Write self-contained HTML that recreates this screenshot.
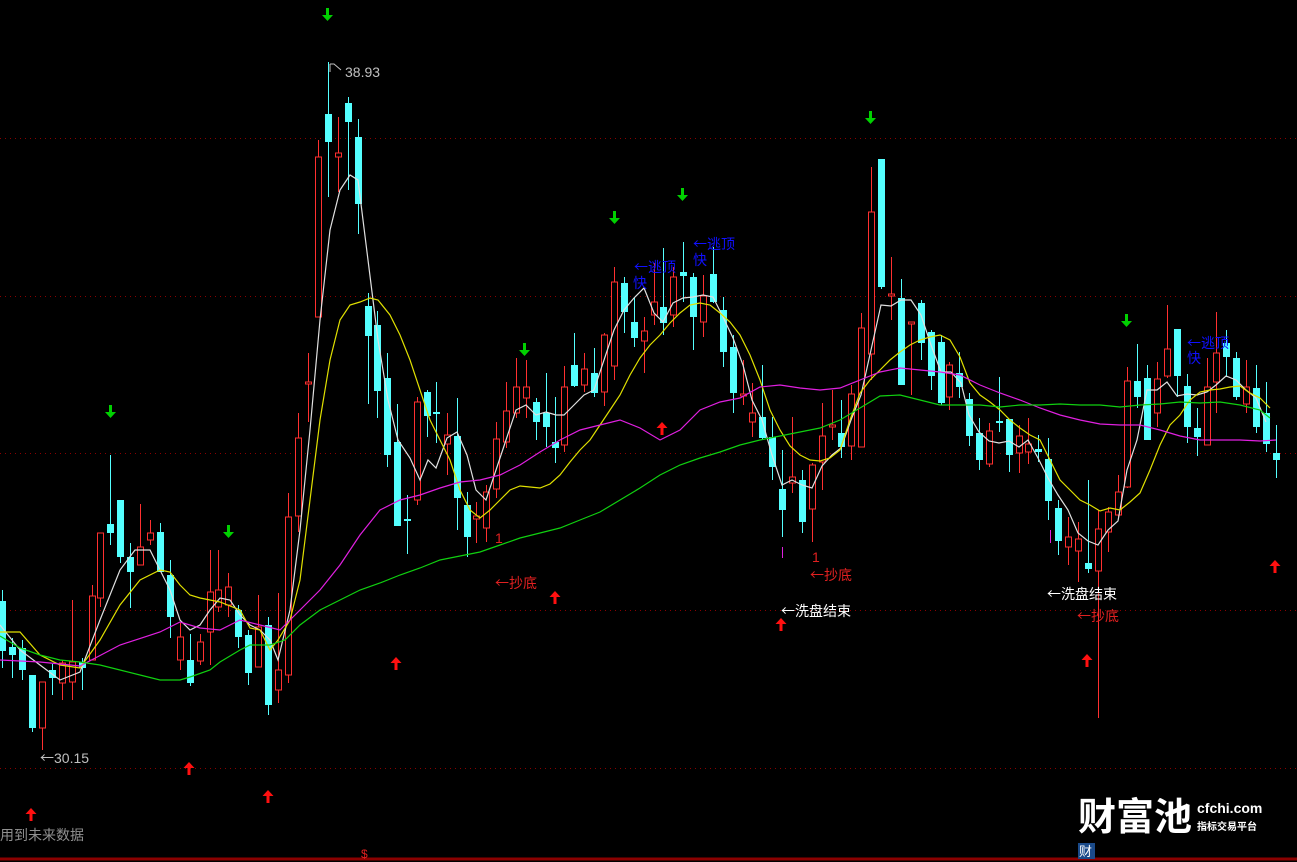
<!DOCTYPE html>
<html><head><meta charset="utf-8"><style>
html,body{margin:0;padding:0;background:#000;width:1297px;height:862px;overflow:hidden}
svg{display:block}
text{font-family:"Liberation Sans","Noto Sans CJK SC",sans-serif}
.cj{font-family:"Noto Sans CJK SC","Liberation Sans",sans-serif}
</style></head><body>
<svg id="s" width="1297" height="862" xmlns="http://www.w3.org/2000/svg">
<g stroke="#8b0000" stroke-dasharray="1,4" stroke-width="1">
<line x1="0" y1="138.5" x2="1297" y2="138.5"/><line x1="0" y1="296.5" x2="1297" y2="296.5"/>
<line x1="0" y1="453.5" x2="1297" y2="453.5"/><line x1="0" y1="610.5" x2="1297" y2="610.5"/>
<line x1="0" y1="768.5" x2="1297" y2="768.5"/></g>
<line x1="0" y1="859" x2="1297" y2="859" stroke="#8b0000" stroke-width="3"/>
<g id="c"></g>
<g id="l" fill="none" stroke-width="1.2"></g>
<g id="a"></g>
<g font-size="14">
<text x="345" y="77" fill="#c0c0c0">38.93</text>
<path d="M330 64 v8 M330 64 h4 l7 6" stroke="#c0c0c0" fill="none"/>
<text x="40" y="763" fill="#c0c0c0" class="cj">←<tspan font-family="Liberation Sans">30.15</tspan></text>
<text x="495" y="543" fill="#e02020">1</text>
<text x="495" y="588" fill="#e02020" class="cj">←抄底</text>
<text x="812" y="562" fill="#e02020">1</text>
<text x="810" y="580" fill="#e02020" class="cj">←抄底</text>
<text x="781" y="616" fill="#fff" class="cj">←洗盘结束</text>
<text x="1047" y="599" fill="#fff" class="cj">←洗盘结束</text>
<text x="1077" y="621" fill="#e02020" class="cj">←抄底</text>
<text x="634" y="272" fill="#1010ff" class="cj">←逃顶</text><text x="633" y="288" fill="#1010ff" class="cj">快</text>
<text x="693" y="249" fill="#1010ff" class="cj">←逃顶</text><text x="693" y="265" fill="#1010ff" class="cj">快</text>
<text x="1187" y="348" fill="#1010ff" class="cj">←逃顶</text><text x="1187" y="363" fill="#1010ff" class="cj">快</text>
<text x="0" y="840" fill="#909090" class="cj">用到未来数据</text>
<text x="361" y="858" fill="#e02020" font-size="12">$</text>
</g>
<text x="1078" y="830" fill="#fff" font-size="38" font-weight="bold" font-family="'Noto Sans CJK SC',sans-serif">财富池</text>
<text x="1197" y="813" fill="#fff" font-size="14" font-weight="bold">cfchi.com</text>
<text x="1197" y="830" fill="#fff" font-size="10" font-weight="bold" font-family="'Noto Sans CJK SC',sans-serif">指标交易平台</text>
<rect x="1078" y="843" width="17" height="16" fill="#1a4a8a"/>
<text x="1079" y="856" fill="#fff" font-size="13" font-family="'Noto Sans CJK SC',sans-serif">财</text>
</svg>
<script>
var C=[[2,601,651,590,668,'c'],[12,647,655,638,678,'c'],[22,648,670,640,680,'c'],[32,675,728,675,732,'c'],[42,682,728,682,750,'r'],[52,670,678,664,695,'c'],[62,663,683,660,700,'r'],[72,662,682,600,700,'r'],[82,662,668,658,690,'c'],[92,596,660,585,660,'r'],[100,533,598,533,607,'r'],[110,524,533,455,545,'c'],[120,500,557,500,563,'c'],[130,557,572,543,608,'c'],[140,547,565,504,565,'r'],[150,533,540,520,545,'r'],[160,532,572,523,572,'c'],[170,575,617,560,638,'c'],[180,637,660,623,670,'r'],[190,660,683,634,686,'c'],[200,642,661,634,665,'r'],[210,592,632,550,665,'r'],[218,590,607,550,612,'r'],[228,587,605,573,617,'r'],[238,610,637,605,648,'c'],[248,635,673,630,685,'c'],[258,627,667,595,667,'r'],[268,625,705,617,715,'c'],[278,670,690,593,703,'r'],[288,517,675,493,683,'r'],[298,438,516,413,532,'r'],[308,382,384,353,422,'r'],[318,157,317,140,317,'r'],[328,114,142,62,197,'c'],[338,153,157,117,192,'r'],[348,103,122,97,190,'c'],[358,137,204,119,234,'c'],[368,306,336,293,404,'c'],[377,325,391,311,418,'c'],[387,378,455,353,467,'c'],[397,442,526,404,526,'c'],[407,519,521,495,554,'c'],[417,402,500,397,505,'r'],[427,392,416,390,437,'c'],[436,412,414,382,443,'c'],[447,435,444,413,475,'r'],[457,436,498,398,530,'c'],[467,505,537,492,557,'c'],[476,516,519,502,543,'r'],[486,492,528,485,542,'r'],[496,439,489,422,498,'r'],[506,411,442,382,448,'r'],[516,387,413,358,418,'r'],[526,387,398,360,418,'r'],[536,402,422,398,440,'c'],[546,413,427,373,447,'c'],[555,442,448,397,463,'c'],[564,387,445,366,452,'r'],[574,365,386,333,387,'c'],[584,369,385,353,392,'r'],[594,373,393,348,397,'c'],[604,335,392,333,406,'r'],[614,282,366,267,380,'r'],[624,283,312,277,333,'c'],[634,322,338,298,347,'c'],[644,331,341,317,373,'r'],[654,302,315,263,325,'r'],[663,307,323,248,335,'c'],[673,277,315,267,327,'r'],[683,272,276,242,302,'c'],[693,277,317,273,350,'c'],[703,296,322,275,337,'r'],[713,274,302,247,303,'c'],[723,310,352,297,367,'c'],[733,347,393,335,413,'c'],[743,394,396,360,405,'r'],[752,413,422,383,437,'r'],[762,417,438,365,440,'c'],[772,437,467,417,480,'c'],[782,489,510,450,537,'c'],[792,477,483,417,493,'r'],[802,480,522,470,533,'c'],[812,465,509,463,542,'r'],[822,436,462,403,490,'r'],[832,425,427,390,440,'r'],[841,433,447,400,458,'c'],[851,394,446,385,460,'r'],[861,328,447,313,447,'r'],[871,212,354,167,380,'r'],[881,159,287,159,289,'c'],[891,294,296,257,320,'r'],[901,298,385,279,385,'c'],[911,322,324,323,395,'r'],[921,303,343,300,360,'c'],[931,332,376,330,390,'c'],[941,342,403,335,405,'c'],[949,365,397,362,410,'r'],[959,373,387,352,398,'c'],[969,399,436,393,446,'c'],[979,433,460,418,470,'c'],[989,431,464,423,467,'r'],[999,421,423,377,432,'c'],[1009,419,455,419,472,'c'],[1019,436,453,425,473,'r'],[1028,444,452,418,464,'r'],[1038,449,452,435,462,'c'],[1048,459,501,438,520,'c'],[1058,508,541,500,555,'c'],[1068,537,547,517,565,'r'],[1078,539,551,522,582,'r'],[1088,563,569,480,573,'c'],[1098,529,571,510,718,'r'],[1108,512,532,507,552,'r'],[1118,492,515,475,517,'r'],[1127,381,487,367,488,'r'],[1137,381,397,344,408,'c'],[1147,378,440,365,440,'c'],[1157,379,413,362,427,'r'],[1167,349,376,305,378,'r'],[1177,329,376,329,397,'c'],[1187,386,427,374,443,'c'],[1197,428,437,408,456,'c'],[1207,387,445,358,445,'r'],[1216,353,382,312,413,'r'],[1226,343,357,330,377,'c'],[1236,358,397,352,400,'c'],[1246,387,404,360,413,'r'],[1256,388,427,365,433,'c'],[1266,413,444,382,452,'c'],[1276,453,460,425,478,'c']];
var g=document.getElementById('c'),h='';
C.forEach(function(d){var x=d[0],col=d[5]=='c'?'#54ffff':'#ff3030';
h+='<line x1="'+(x+.5)+'" y1="'+d[3]+'" x2="'+(x+.5)+'" y2="'+d[4]+'" stroke="'+col+'"/>';
var t=Math.min(d[1],d[2]),bh=Math.max(Math.abs(d[2]-d[1]),1.5);
if(d[5]=='c')h+='<rect x="'+(x-3)+'" y="'+t+'" width="7" height="'+bh+'" fill="#54ffff"/>';
else h+='<rect x="'+(x-2.5)+'" y="'+t+'" width="6" height="'+bh+'" fill="#000" stroke="#ff3030"/>';});
h+='<line x1="782.5" y1="547" x2="782.5" y2="558" stroke="#e020e0"/><line x1="1050.5" y1="530" x2="1050.5" y2="543" stroke="#e020e0"/>';
g.innerHTML=h;
var L={'#e0e0e0':"0,625 20,650 40,665 60,680 80,672 100,620 120,570 135,550 150,550 160,570 170,590 180,620 190,630 200,625 210,610 220,598 230,600 240,615 250,625 260,630 270,640 278,660 290,610 300,530 310,430 320,320 330,230 340,190 350,175 358,180 368,260 378,340 388,400 398,440 410,458 420,480 428,460 436,468 447,438 457,432 467,455 476,490 486,500 496,470 506,440 516,410 526,405 536,415 546,412 556,415 564,415 574,405 584,395 594,390 604,360 614,330 624,310 634,298 644,288 654,313 663,322 673,303 683,298 693,297 703,295 713,297 723,317 733,338 743,365 752,400 762,420 772,455 782,485 792,480 802,485 812,488 822,466 832,455 841,448 851,420 861,395 871,350 881,305 891,306 901,300 911,300 921,315 931,345 941,372 951,372 961,383 969,415 979,432 989,441 999,443 1009,441 1019,447 1028,440 1038,458 1048,478 1058,495 1068,510 1078,533 1088,541 1098,545 1108,530 1118,521 1127,470 1137,440 1147,390 1157,390 1167,382 1177,396 1187,394 1197,395 1207,392 1216,385 1226,376 1236,380 1246,390 1256,398 1266,422",
'#e0e000':"0,632 20,632 40,655 60,665 80,668 100,640 120,605 140,580 160,570 170,572 180,585 190,595 200,598 210,600 220,602 240,610 250,628 260,630 270,650 278,640 290,620 300,580 310,500 320,420 330,360 340,320 350,305 360,302 370,298 378,300 390,315 400,335 410,360 420,390 430,420 440,440 450,460 460,490 470,510 480,518 490,510 500,500 510,490 520,486 530,487 540,488 550,484 560,475 570,462 580,450 590,440 600,425 610,410 620,395 630,375 640,358 650,345 660,335 670,323 680,313 690,305 700,303 710,305 720,313 730,322 740,335 750,355 760,380 770,410 780,430 790,446 800,455 810,460 820,461 830,458 840,450 850,420 860,393 870,380 880,370 890,360 900,352 910,345 920,340 930,337 940,335 950,340 960,357 970,383 980,395 990,402 1000,410 1010,420 1020,428 1030,435 1040,440 1050,460 1060,480 1070,490 1080,500 1090,505 1100,511 1110,508 1120,510 1130,502 1140,493 1150,470 1160,445 1170,425 1180,415 1190,400 1200,392 1210,390 1220,389 1230,387 1240,386 1250,393 1260,398 1270,408",
'#e020e0':"0,660 40,662 80,666 120,645 160,632 180,622 200,628 220,630 240,620 260,625 280,630 300,610 320,590 340,565 360,535 380,510 400,500 420,495 440,488 460,482 480,480 500,475 520,465 540,452 560,440 580,430 600,425 620,420 640,428 660,440 680,430 700,410 720,402 740,398 760,387 780,385 800,388 820,390 840,388 860,380 880,372 900,368 920,370 940,372 960,375 980,385 1000,393 1020,400 1040,408 1060,415 1080,420 1100,424 1120,425 1140,425 1160,430 1180,436 1200,440 1220,440 1240,440 1260,441 1276,440",
'#10d010':"0,636 20,648 40,655 60,660 80,662 100,665 120,670 140,675 160,680 180,680 190,677 210,670 220,662 240,650 250,645 270,645 285,640 300,625 320,610 340,600 360,590 380,583 400,575 420,568 440,560 460,556 480,552 500,545 520,538 540,533 560,528 580,520 600,512 620,500 640,488 660,475 680,465 700,458 720,452 740,445 760,440 780,436 800,432 820,428 840,420 860,408 880,396 900,395 920,400 940,405 960,405 980,405 1000,407 1020,405 1040,405 1060,404 1080,405 1100,405 1120,407 1140,405 1160,404 1180,402 1200,403 1220,402 1240,405 1260,410 1270,418"};
var s='';for(var k in L)s+='<polyline points="'+L[k]+'" stroke="'+k+'"/>';
document.getElementById('l').innerHTML=s;
var a='';
[[327,8],[110,405],[228,525],[524,343],[614,211],[682,188],[870,111],[1126,314]].forEach(function(p){var x=p[0],y=p[1];a+='<path d="M'+(x-1)+' '+y+'h3v7h4l-5.5,6l-5.5,-6h4z" fill="#00d000"/>';});
[[31,808],[189,762],[268,790],[396,657],[555,591],[662,422],[781,618],[1087,654],[1275,560]].forEach(function(p){var x=p[0],y=p[1];a+='<path d="M'+x+' '+y+'l5.5,6h-4v7h-3v-7h-4z" fill="#ff1010"/>';});
document.getElementById('a').innerHTML=a;
</script>
</body></html>
